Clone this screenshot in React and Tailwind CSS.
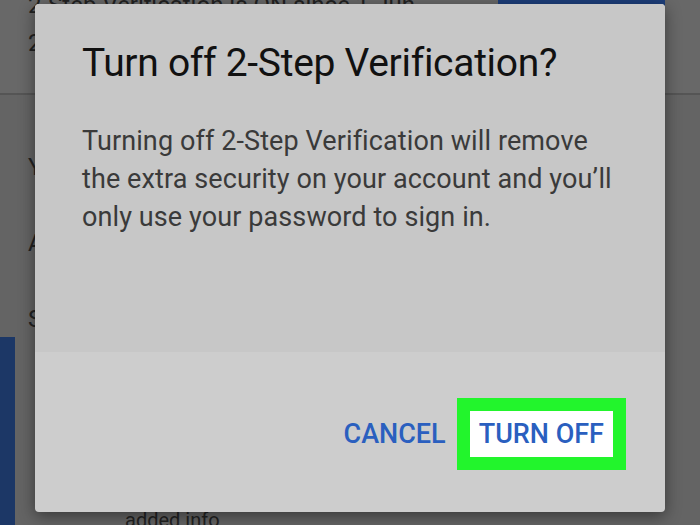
const App = () => {
  return (
    <div className="relative w-[700px] h-[525px] overflow-hidden bg-[#646464] font-['Roboto',sans-serif]">
      {/* page behind the scrim */}
      <div className="flex flex-col h-full">
        <div className="flex h-[100px] border-b-2 border-[#555] bg-[#686868]">
          <div className="w-[498px] pl-[28px] text-[24px] leading-[38px] text-[#222] -mt-[14px]">
            <p>2-Step Verification is ON since 1 Jun</p>
            <p>2017</p>
          </div>
          <div className="w-[167px] h-[55px] bg-[#1d3e7a] rounded-b"></div>
        </div>
        <div className="flex-1 flex flex-col text-[#222] text-[24px] pl-[28px] pt-[54px] gap-[40px] leading-[36px]">
          <p>You</p>
          <p>Add</p>
          <p>Sec</p>
        </div>
        <div className="flex h-[197px]">
          <div className="w-[15px] bg-[#1c3766]"></div>
          <div className="flex-1 flex items-end pl-[110px] text-[20px] text-[#222] leading-[10px]">
            added info
          </div>
        </div>
      </div>

      {/* dialog */}
      <div className="absolute left-[35px] top-[4px] w-[630px] h-[508px] rounded-[4px] bg-[#cdcdcd] shadow-[0_4px_16px_rgba(0,0,0,0.45)] flex flex-col overflow-hidden">
        <div className="h-[348px] bg-[#c7c7c7] px-[47px] pt-[36px]">
          <h1 className="text-[39px] leading-[46px] text-[#111] tracking-[-0.3px]">Turn off 2-Step Verification?</h1>
          <p className="mt-[36px] text-[27px] leading-[38px] text-[#3a3a3a] tracking-[0.1px]">
            Turning off 2-Step Verification will remove
            <br />
            the extra security on your account and you’ll
            <br />
            only use your password to sign in.
          </p>
        </div>
        <div className="flex-1 flex justify-end items-start pt-[46px] pr-[39px] gap-[11px]">
          <button className="h-[73px] text-[27px] text-[#2a5fbf] font-medium">CANCEL</button>
          <div className="border-[13px] border-[#22f52c]">
            <button className="bg-white h-[46px] px-[9px] text-[27px] text-[#2a5fbf] font-medium">TURN OFF</button>
          </div>
        </div>
      </div>
    </div>
  );
};

export default App;
